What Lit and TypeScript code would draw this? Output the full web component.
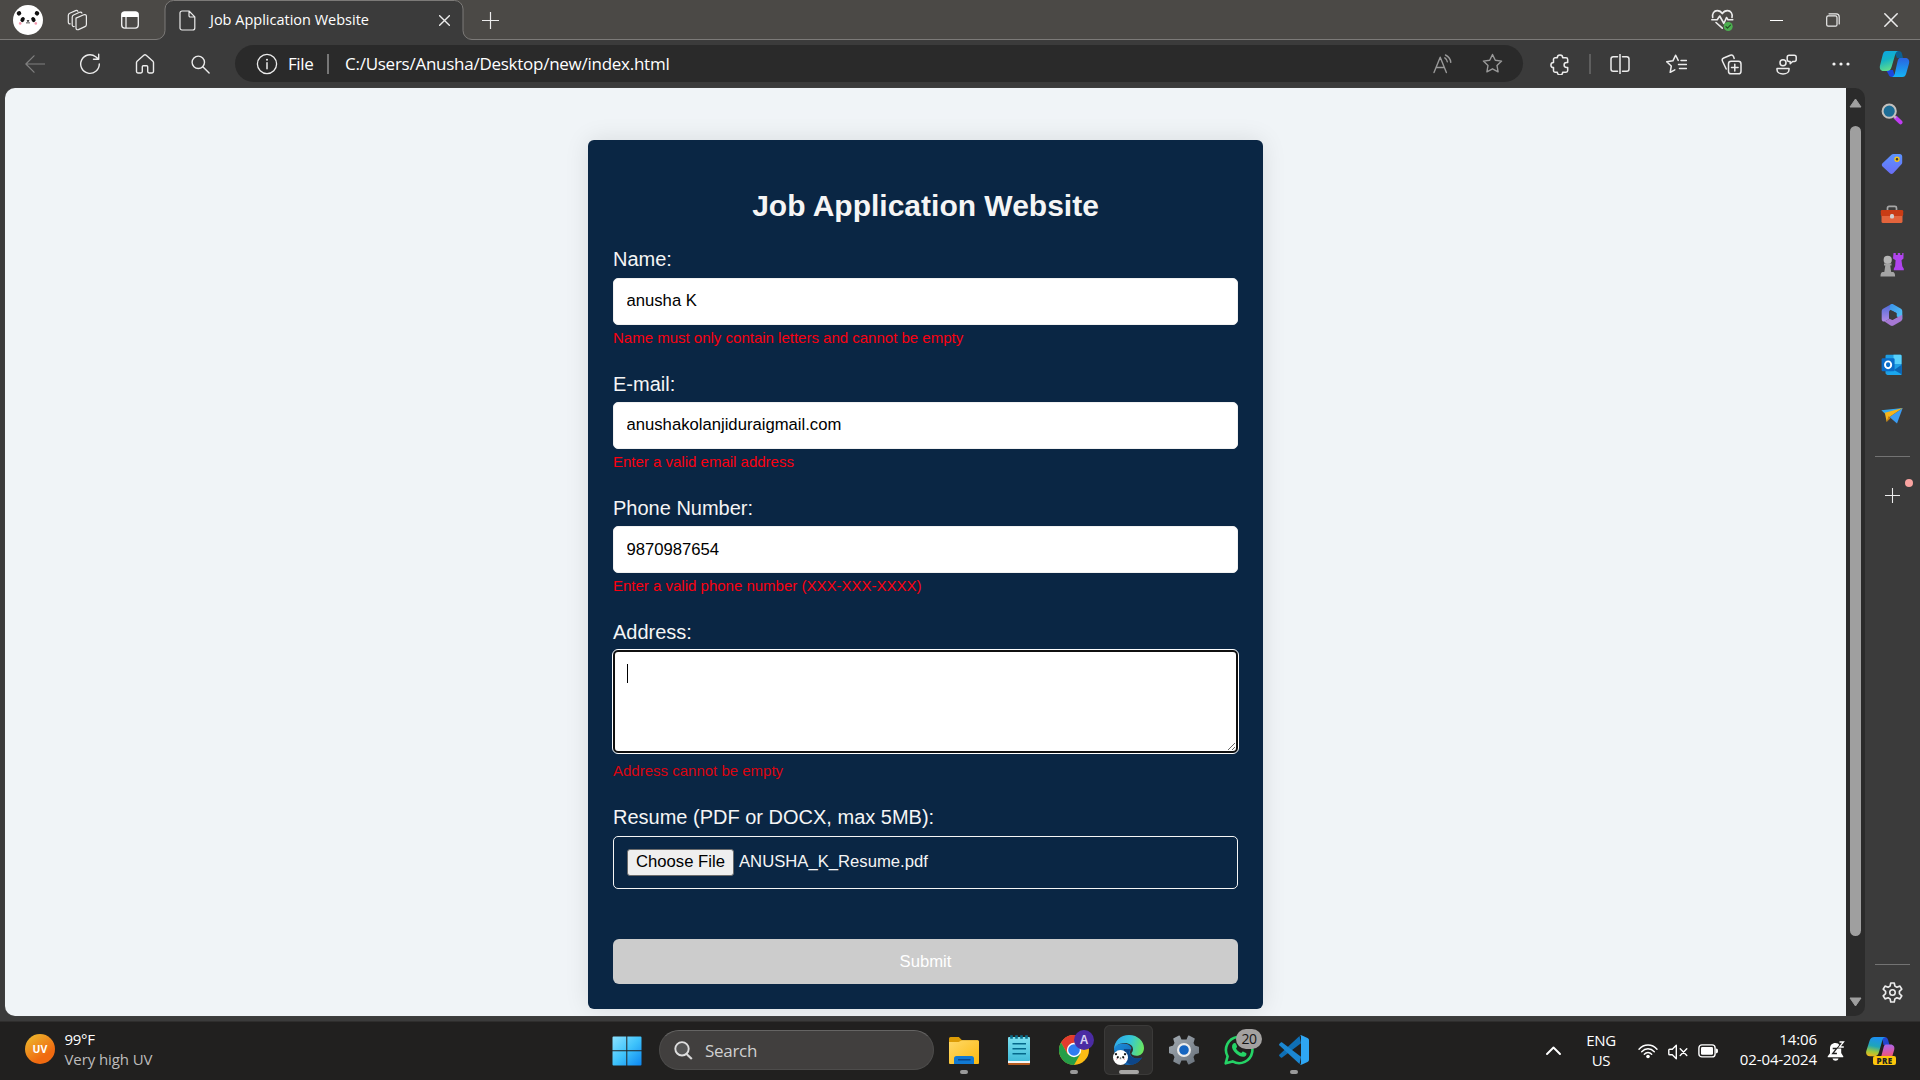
import { LitElement, html, css, nothing } from "lit";
import { customElement } from "lit/decorators.js";

/* ---------- browser chrome icons ---------- */

const panda = (size: number) => html`<svg width=${size} height=${size} viewBox="0 0 30 30">
  <circle cx="15" cy="15" r="15" fill="#fff" />
  <ellipse cx="6" cy="8.3" rx="2.3" ry="2.2" fill="#111" transform="rotate(-35 6 8.3)" />
  <ellipse cx="24" cy="8.3" rx="2.3" ry="2.2" fill="#111" transform="rotate(35 24 8.3)" />
  <ellipse cx="9.6" cy="14.6" rx="2" ry="2.6" fill="#111" transform="rotate(30 9.6 14.6)" />
  <ellipse cx="20.4" cy="14.6" rx="2" ry="2.6" fill="#111" transform="rotate(-30 20.4 14.6)" />
  <circle cx="7.2" cy="18.4" r="1.3" fill="#f49ab0" />
  <circle cx="22.8" cy="18.4" r="1.3" fill="#f49ab0" />
  <path d="M14 15.6h2l-1 1.2z" fill="#111" stroke="#111" stroke-width=".6" />
  <path d="M13 17.6q1 1 2 0q1 1 2 0" fill="none" stroke="#111" stroke-width=".7" />
</svg>`;

const workspaces = html`<svg class="ln" width="22" height="22" viewBox="0 0 22 22">
  <path d="M10.2 8.3 18 4.9c1.400-.5 2.600.3 2.600 1.700v8c0 1-.5 1.800-1.400 2.200l-6.600 3c-1.300.5-2.400-.2-2.400-1.600z" transform="translate(-.2 .8)" />
  <path d="M8.200 17.500c-1.300.2-2-.5-2-1.800V8.200c0-1 .5-1.800 1.400-2.200l6-2.700c1-.4 1.900-.1 2.300.8" />
  <path d="M4.200 14.900c-1.200.1-1.900-.6-1.900-1.800V6.400c0-1 .5-1.800 1.400-2.200L9.600 1.600c1-.4 1.800-.1 2.300.7" />
</svg>`;

const tabActions = html`<svg width="20" height="20" viewBox="0 0 20 20">
  <rect x="1.700" y="1.900" width="16.600" height="16.200" rx="3" fill="none" stroke="#ececec" stroke-width="1.400" />
  <path d="M1.700 7V4.500a2.700 2.700 0 0 1 2.700-2.700h11.200a2.700 2.700 0 0 1 2.700 2.700V7z" fill="#fff" />
  <path d="M6 7v11" stroke="#ececec" stroke-width="1.300" />
</svg>`;

const page = html`<svg class="ln" width="17" height="21" viewBox="0 0 17 21">
  <path d="M3 1h7l5.800 5.800V18a2 2 0 0 1-2 2H3a2 2 0 0 1-2-2V3a2 2 0 0 1 2-2zM10 1v4.800a1.200 1.200 0 0 0 1.200 1.200h4.600" />
</svg>`;

const cross = (s: number, w = 1.3) => html`<svg class="ln" width=${s} height=${s} viewBox="0 0 12 12">
  <path d="M.7.7l10.600 10.600M11.300.7.7 11.300" stroke-width=${w} />
</svg>`;
const plus = (s: number) => html`<svg class="ln" width=${s} height=${s} viewBox="0 0 17 17"><path d="M8.500 0v17M0 8.500h17" /></svg>`;

const heart = html`<svg class="ln" width="24" height="24" viewBox="0 0 24 24">
  <path d="M1.700 9.500C.9 5.800 3 2.600 6.200 2.600c2.400 0 4 1.100 5.100 3 1.100-1.900 2.800-3 5.200-3 3.300 0 5.300 3.200 4.500 6.900" stroke-width="1.600" />
  <path d="M.8 11.800h5.400L8.700 8l4.200 7.500 2.600-6 1.500 2.300h4.800" stroke-width="1.600" />
  <path d="m5 14.500 6.300 5.700" stroke-width="1.600" />
  <circle cx="17.200" cy="18.500" r="4.500" fill="#4caf50" stroke="none" />
  <path d="m15 18.700 1.500 1.400 2.900-3" stroke="#234c25" stroke-width="1.200" />
</svg>`;
const minimize = html`<svg class="ln" width="13" height="3" viewBox="0 0 13 3"><path d="M0 1.500h13" stroke="#fff" stroke-width="1.200" /></svg>`;
const restore = html`<svg class="ln" width="14" height="14" viewBox="0 0 14 14">
  <rect x=".7" y="2.900" width="10.300" height="10.300" rx="1.500" />
  <path d="M3 .8h7.300c1.700 0 2.900 1.200 2.900 2.900V11" />
</svg>`;

const back = html`<svg class="ln dim" width="20" height="18" viewBox="0 0 20 18"><path d="M20 9H1M9 .8.900 9 9 17.200" /></svg>`;
const refresh = html`<svg class="ln" width="22" height="22" viewBox="0 0 22 22">
  <path d="M20.300 11a9.300 9.300 0 1 1-3.600-7.300l2.600 2.200M19.700 1.200v5h-5.200" stroke-width="1.400" />
</svg>`;
const home = html`<svg class="ln" width="20" height="20" viewBox="0 0 20 20">
  <path d="M1.500 8.600c0-.6.200-1 .6-1.400l6.700-5.900a1.800 1.800 0 0 1 2.400 0l6.700 5.900c.4.400.6.8.6 1.400v9c0 .8-.6 1.400-1.400 1.400h-3c-.8 0-1.400-.6-1.400-1.400v-4.800c0-.6-.4-1-1-1H8.300c-.6 0-1 .4-1 1v4.800c0 .8-.6 1.400-1.400 1.400h-3c-.8 0-1.400-.6-1.400-1.400z" stroke-width="1.400" />
</svg>`;
const search = html`<svg class="ln" width="19" height="19" viewBox="0 0 19 19">
  <circle cx="7.300" cy="7.300" r="6.200" stroke-width="1.400" /><path d="m11.800 11.800 6.300 6.300" stroke-width="1.400" />
</svg>`;
const info = html`<svg class="ln" width="22" height="22" viewBox="0 0 22 22">
  <circle cx="11" cy="11" r="9.600" stroke-width="1.300" /><path d="M11 9.800v6" stroke-width="1.500" /><circle cx="11" cy="6.800" r="1" fill="#eee" stroke="none" />
</svg>`;
const readAloud = html`<svg class="ln dim2" width="20" height="20" viewBox="0 0 20 20">
  <path d="M1 18.500 7.200 3.200l6.200 15.300M3.200 13.500h8M11.800 3.800c1.500 1 2.400 2.300 2.500 4M12.500 1c3 1.500 4.900 3.900 5.300 7.300" />
</svg>`;
const starPath = "M10.500 1.500l2.800 5.700 6.300.9-4.600 4.400 1.100 6.300-5.600-3-5.600 3L6 12.500 1.400 8.100l6.300-.9z";
const star = html`<svg class="ln dim2" width="21" height="21" viewBox="0 0 21 21"><path d=${starPath} /></svg>`;
const puzzle = html`<svg class="ln" width="20" height="21" viewBox="0 0 20 21">
  <path d="M7.300 3.700a2.700 2.700 0 0 1 5.400 0h3.300c1 0 1.700.7 1.700 1.700v3.200h-1.200a2.400 2.400 0 0 0 0 4.800h1.200v3.200c0 1-.7 1.700-1.700 1.700h-3.300a2.700 2.700 0 0 1-5.400 0H5.200c-1 0-1.700-.7-1.700-1.700v-3a2.600 2.600 0 0 1 0-5.200v-3c0-1 .7-1.700 1.700-1.700z" stroke-width="1.500" />
</svg>`;
const split = html`<svg class="ln" width="20" height="20" viewBox="0 0 20 20">
  <path d="M7.500 2.700H3.300C2 2.700 1 3.700 1 5v10c0 1.300 1 2.300 2.300 2.300h4.200M12.500 2.700h4.200C18 2.700 19 3.700 19 5v10c0 1.300-1 2.300-2.300 2.300h-4.200M10 .5v19" stroke-width="1.500" />
</svg>`;
const favorites = html`<svg class="ln" width="21" height="20" viewBox="0 0 21 20">
  <path d="M12.200 6.400 9.700 1.200 6.900 6.800.7 7.700l4.600 4.300-1.100 6.300 4.600-2.500M15 6.500h5.500M12.500 10.500h8M13.500 14.500h7" stroke-width="1.500" />
</svg>`;
const collections = html`<svg class="ln" width="21" height="21" viewBox="0 0 21 21">
  <rect x="7.500" y="7.300" width="12.500" height="12.500" rx="2.600" stroke-width="1.500" />
  <path d="M13.800 10.300v6.600M10.500 13.600h6.600M5.200 15 1.500 7.200c-.6-1.300-.1-2.600 1.200-3.200l6.600-2.700c1.400-.5 2.800.2 3.300 1.500l.6 1.600" stroke-width="1.500" />
</svg>`;
const people = html`<svg class="ln" width="21" height="21" viewBox="0 0 21 21">
  <circle cx="7" cy="8.800" r="3" stroke-width="1.500" />
  <path d="M1 14.500h12v1.200c0 2.400-2.600 4.300-6 4.300s-6-1.900-6-4.300zM13.200 1.300h5a2 2 0 0 1 2 2v2.200a2 2 0 0 1-2 2h-1.600l-2.400 2.300V7.500h-1a2 2 0 0 1-2-2V3.300a2 2 0 0 1 2-2z" stroke-width="1.500" />
</svg>`;
const dots = html`<svg width="18" height="4" viewBox="0 0 18 4" fill="#f2f2f2"><circle cx="2" cy="2" r="1.600" /><circle cx="9" cy="2" r="1.600" /><circle cx="16" cy="2" r="1.600" /></svg>`;
const copilot = html`<svg width="31" height="28" viewBox="0 0 31 28">
  <defs>
    <linearGradient id="cpA" x1="0" y1="0" x2=".3" y2="1"><stop offset="0" stop-color="#0ba5e8" /><stop offset=".5" stop-color="#15b3c4" /><stop offset="1" stop-color="#5fdc8d" /></linearGradient>
    <linearGradient id="cpB" x1="0" y1="0" x2="0" y2="1"><stop offset="0" stop-color="#2a63e2" /><stop offset="1" stop-color="#14b4f5" /></linearGradient>
  </defs>
  <path d="M15 1h4.500c2 0 3 1 3.500 2.700L24 8h-6z" fill="#0d5f91" />
  <path d="M7 20h7l2 7h-3c-2 0-3-1-3.500-2.700z" fill="#1b47dc" />
  <path d="M7.500 1H19c-1.500.5-2.200 1.500-2.800 3.500l-3.500 12c-.9 3-2 4.500-5 4.500H4.500c-3 0-4.200-2.500-3.500-5.500L3.800 4.500C4.500 2 5.500 1 7.500 1z" fill="url(#cpA)" />
  <path d="M21 8h5.500c3 0 4.300 2.500 3.500 5.500l-2.800 10c-.7 2.500-1.800 3.500-3.800 3.500H13c1.500-.5 2.200-1.500 2.800-3.500l2.500-11C19 9.500 19.500 8 21 8z" fill="url(#cpB)" />
</svg>`;

/* ---------- sidebar icons ---------- */

const sideIcons = [
  html`<svg width="22" height="22" viewBox="0 0 22 22">
    <path d="m14.500 14.500 5 4.800" stroke="#c03cf4" stroke-width="4" stroke-linecap="round" /><path d="m12.500 12.500 2.500 2.500" stroke="#bbb" stroke-width="2" />
    <circle cx="8.200" cy="8.200" r="6.600" fill="#1d6d96" stroke="#c4c1be" stroke-width="2" />
  </svg>`,
  html`<svg width="22" height="22" viewBox="0 0 22 22">
    <defs><linearGradient id="tg" x1="0" y1="0" x2="0" y2="1"><stop offset="0" stop-color="#5b93ff" /><stop offset="1" stop-color="#6a6df5" /></linearGradient></defs>
    <path d="M12.500 1h6.300c1.400 0 2.400 1 2.400 2.400v6.200c0 .7-.2 1.200-.7 1.700l-8.300 9c-1 1-2.400 1-3.400 0L1.500 13.500c-.9-1-.9-2.300 0-3.200l9-8.500c.5-.5 1.200-.8 2-.8z" fill="url(#tg)" />
    <circle cx="16" cy="6.300" r="2" fill="#3a3a3a" stroke="#f5c518" stroke-width="1.400" />
  </svg>`,
  html`<svg width="24" height="18" viewBox="0 0 24 18">
    <path d="M7.500 5V3c0-1 .6-1.600 1.600-1.600h5.800c1 0 1.600.6 1.600 1.600v2" fill="none" stroke="#a7a7a7" stroke-width="1.700" />
    <rect x="1.500" y="8" width="21" height="10" rx="1.600" fill="#e3643c" /><rect x=".8" y="5" width="22.400" height="6" rx="1.300" fill="#c93c15" /><rect x="10" y="9" width="4" height="4.500" rx="1.500" fill="#d0d0d0" />
  </svg>`,
  html`<svg width="24" height="24" viewBox="0 0 24 24">
    <path d="M13.500 0h2.300v2h2V0h2.400v2h2V0h1.300v5.500l-2 1.800.8 6 1.500 2.500v1.500h-10v-1.500l1.300-2.500.5-6-2.600-1.800z" fill="#b044ee" />
    <circle cx="7.700" cy="6.900" r="4.100" fill="#b5b5b5" />
    <path d="M4 10.500h7.500v2h-1.300l1 6.500h1.600c1.500 0 2.300 1.500 2.300 4.500H.500c0-3 .8-4.500 2.300-4.500h1.500l1-6.500H4z" fill="#a4a4a4" />
  </svg>`,
  html`<svg width="22" height="24" viewBox="0 0 22 24">
    <defs><linearGradient id="mA" x1="0" y1="0" x2="0" y2="1"><stop offset="0" stop-color="#4a6ad8" /><stop offset="1" stop-color="#b28be6" /></linearGradient><linearGradient id="mB" x1="0" y1="0" x2="1" y2="1"><stop offset="0" stop-color="#3a8fe8" /><stop offset="1" stop-color="#54c8f6" /></linearGradient></defs>
    <path d="M10.500 1 2.500 5.500C1.300 6.200.7 7.200.7 8.600v7.600c0 2 1.800 3 3.400 2l4-2.300V9.500c0-1.200.5-2 1.400-2.700z" fill="url(#mA)" />
    <path d="M10 1.200c.9-.4 1.700-.3 2.600.2l7 4.100c1.200.7 1.700 1.700 1.700 3v8l-5.800-3.300V10L8.600 6.500 9 2.500z" fill="url(#mB)" />
    <path d="M3.500 18.600 8.500 15.700l3 1.400 9.700-5.300v3.800c0 1.300-.5 2.300-1.700 3l-7 4c-1 .5-2 .5-3 0z" fill="#a678d4" />
    <path d="m11 7.800 4.500 2.500v4l-4 2.500-3.400-1.800V9.800c0-1 .8-1.600 1.400-2z" fill="#3b3b3b" />
  </svg>`,
  html`<svg width="22" height="22" viewBox="0 0 22 22">
    <rect x="4.500" y=".8" width="16" height="19.500" rx="1.200" fill="#1f9fe4" /><path d="M12.500.8h7a1 1 0 0 1 1 1V10h-8z" fill="#58d1fb" />
    <path d="M21 10.500v9c0 .9-.7 1.500-1.500 1.500H5l9-6z" fill="#1aa7ee" /><path d="m21 10.500-8 5.500 8 4.500z" fill="#0c66b3" />
    <rect x=".6" y="4.300" width="13" height="13" rx="1.200" fill="#0a6cc7" /><ellipse cx="7.100" cy="10.800" rx="3.100" ry="3.400" fill="none" stroke="#fff" stroke-width="1.900" />
  </svg>`,
  html`<svg width="22" height="17" viewBox="0 0 22 17">
    <path d="M.3 3.200 21.700.9 6 8.500z" fill="#35a9f0" /><path d="M21.700.9 16 16.500 8.500 10z" fill="#3b9cf2" /><path d="M21.700.9 3.800 5.800 5.700 15l2-4.500z" fill="#f4b41c" /><path d="m5.700 15 3.700-3.800L7.500 9z" fill="#c77e12" />
  </svg>`,
];

const gearPath =
  "M8.900 1.300h3.200l.6 2.900 1.800 1 2.800-1 1.700 2.800-2.200 2v2l2.200 2-1.700 2.800-2.800-1-1.800 1-.6 2.900H8.900l-.6-2.900-1.800-1-2.800 1L2 13l2.200-2V9L2 7l1.700-2.800 2.800 1 1.800-1z";
const settingsLine = html`<svg class="ln" width="23" height="23" viewBox="0 0 21 20"><path d=${gearPath} stroke-width="1.500" /><circle cx="10.500" cy="10" r="2.500" stroke-width="1.400" /></svg>`;

/* ---------- taskbar icons ---------- */

const windowsLogo = html`<svg width="30" height="30" viewBox="0 0 30 30">
  <defs><linearGradient id="wl" gradientUnits="userSpaceOnUse" x1="0" y1="0" x2="30" y2="30"><stop offset="0" stop-color="#8fe3ff" /><stop offset=".5" stop-color="#3fc3fb" /><stop offset="1" stop-color="#0a84f0" /></linearGradient></defs>
  <path fill="url(#wl)" d="M1.500.5H14.300v13.800H.5V1.500a1 1 0 0 1 1-1zM15.300.5h13.200a1 1 0 0 1 1 1v12.800H15.300zM.5 15.300h13.800v14.200H1.500a1 1 0 0 1-1-1zM15.300 15.300h14.200v13.200a1 1 0 0 1-1 1H15.300z" />
</svg>`;
const taskSearch = html`<svg width="19" height="19" viewBox="0 0 19 19"><path d="m12 12.500 5.800 5.500" stroke="#d8d8d8" stroke-width="2.200" /><circle cx="8" cy="7.800" r="6.700" fill="#555" stroke="#dedede" stroke-width="1.900" /></svg>`;
const folder = html`<svg width="30" height="27" viewBox="0 0 30 27">
  <defs><linearGradient id="fd" x1="0" y1="0" x2="1" y2="1"><stop offset="0" stop-color="#ffd968" /><stop offset="1" stop-color="#fbb90f" /></linearGradient></defs>
  <path d="M0 1.500A1.500 1.500 0 0 1 1.500 0h8.300L13 3.300h15.500A1.500 1.500 0 0 1 30 4.800V8H0z" fill="#dc9c06" />
  <path d="M0 5h9.500L13 3.300h15.500A1.500 1.500 0 0 1 30 4.800V26a1 1 0 0 1-1 1H1a1 1 0 0 1-1-1z" fill="url(#fd)" />
  <path d="M5 27v-5.500A2.500 2.500 0 0 1 7.500 19h15a2.500 2.500 0 0 1 2.500 2.500V27z" fill="#1179d2" /><path d="M9 22.800h12.500" stroke="#0a3f80" stroke-width="1.300" />
</svg>`;
const notepad = html`<svg width="22" height="30" viewBox="0 0 22 30">
  <rect x="0" y="24" width="22" height="6" rx="1" fill="#b75b1e" /><rect x="0" y="24" width="22" height="4" fill="#f5f5f5" />
  <defs><linearGradient id="np" x1="0" y1="0" x2="0" y2="1"><stop offset="0" stop-color="#7be0ef" /><stop offset="1" stop-color="#41bcd9" /></linearGradient></defs>
  <rect x="0" y="2" width="22" height="24" rx="1" fill="url(#np)" />
  <path d="M4.500 8.700h13.500M4.500 13.700h13.500M4.500 18.700h13.500" stroke="#04688a" stroke-width="1.500" />
  <path d="M3.500.3v3.500M8.500.3v3.500M13.500.3v3.500M18.500.3v3.500" stroke="#0b6f8c" stroke-width="2.600" />
</svg>`;
const chrome = html`<svg width="30" height="30" viewBox="0 0 30 30">
  <circle cx="15" cy="15" r="15" fill="#fbbc14" />
  <path d="M2 7.500A15 15 0 0 1 28 7.500H15l-6.500 11.300z" fill="#e33b2e" />
  <path d="M2 7.500A15 15 0 0 0 15 30l6.500-11.300h-13z" fill="#259e48" />
  <circle cx="15" cy="15" r="7.200" fill="#fff" /><circle cx="15" cy="15" r="5.800" fill="#2f7cf0" />
</svg>`;
const edge = html`<svg width="30" height="30" viewBox="0 0 30 30">
  <defs>
    <linearGradient id="eA" x1="0" y1=".4" x2="1" y2=".6"><stop offset="0" stop-color="#2fa8ea" /><stop offset=".5" stop-color="#34c6d8" /><stop offset="1" stop-color="#6ce85a" /></linearGradient>
    <linearGradient id="eB" x1="0" y1="0" x2="1" y2="1"><stop offset="0" stop-color="#1c90de" /><stop offset="1" stop-color="#0f4f99" /></linearGradient>
  </defs>
  <path d="M0 14C1 21 3 30 15 30c6 0 10.500-3 13-7.500-6 3-12-.5-12-5 0-2 1-3 1.500-4.500C15 7 3 7 0 14z" fill="url(#eB)" />
  <path d="M10 14c-3 7 1 14.500 8 15.700 4-.7 8-3.500 10-7.200-6 3-12.500-.5-12.500-5 0-1.500.5-2.500 1.200-3.300z" fill="#0d4689" />
  <path d="M0 14.500C0 6 6.500 0 15 0c9 0 15 6.500 15 13 0 5-3.500 7.800-7.500 7.800-3 0-5-1-5-2.200 0-1 1.500-1.500 1.500-4.600 0-3.500-4-6-8.500-6C5.500 8 1.500 10.500 0 14.500z" fill="url(#eA)" />
</svg>`;
const settingsColor = html`<svg width="30" height="30" viewBox="0 0 30 30">
  <defs><linearGradient id="sg" x1="0" y1="0" x2="1" y2="1"><stop offset="0" stop-color="#a3abb2" /><stop offset="1" stop-color="#68717b" /></linearGradient></defs>
  <path d="M12 5.200 10.300 1.200 5 3.800 6.300 8 4.500 11.300.5 12.500v5l4 1.200L6.300 22 5 26.200l5.300 2.600L12 24.800h6l1.700 4 5.300-2.600L23.700 22l1.800-3.300 4-1.200v-5l-4-1.200L23.700 8 25 3.800l-5.300-2.600-1.700 4z" fill="url(#sg)" stroke="url(#sg)" stroke-width="1.500" stroke-linejoin="round" />
  <circle cx="15" cy="15" r="5.900" fill="#1565c0" stroke="#ececec" stroke-width="2.200" />
</svg>`;
const whatsapp = html`<svg width="30" height="30" viewBox="0 0 30 30">
  <path d="M1.700 28.300 3.600 21.300a13.200 13.200 0 1 1 5 5.100z" fill="none" stroke="#25d366" stroke-width="2.600" stroke-linejoin="round" />
  <path d="M10.500 8c.8-.2 1.200.1 1.500.8l1 2.500c.2.600-.1 1.100-1 2.100 1.500 2.500 2.800 3.600 5.300 4.600.7-1 1.300-1.700 1.700-1.600l3 1.500c.8.400.6 2.200-.4 3-2.400 1.900-6 .6-9-1.800-3.500-3-5.300-6.100-4.400-8.800.4-1.200 1.300-2 2.300-2.300z" fill="#25d366" />
</svg>`;
const vscode = html`<svg width="30" height="30" viewBox="0 0 30 30">
  <path d="m22 8.300-18.800 14.200c-.5.400-1 .3-1.400 0l-1.300-1.300c-.6-.5-.6-1.200 0-1.700L20.500 1z" fill="#0f6fb5" />
  <path d="M22 21.700 3.200 7.500c-.5-.4-1-.3-1.400 0L.5 8.800c-.6.500-.6 1.200 0 1.700L20.500 29z" fill="#1b87d2" />
  <path d="M20.500 1c.6-.7 1.500-.9 2.500-.5l5.500 2.600c1 .5 1.500 1.200 1.500 2.300v19.200c0 1.100-.5 1.800-1.500 2.300L23 29.500c-1 .4-1.900.2-2.500-.5.900.6 1.500-.1 1.500-1V2c0-.9-.6-1.600-1.500-1z" fill="#2ea6f3" />
</svg>`;
const chevron = html`<svg class="ln" width="15" height="9" viewBox="0 0 15 9"><path d="m1 8 6.500-6.500L14 8" stroke="#fff" stroke-width="1.900" /></svg>`;
const wifi = html`<svg class="ln" width="20" height="16" viewBox="0 0 20 16">
  <path d="M1 6.200c5-5.600 13-5.600 18 0M3.700 8.700c3.600-3.900 9-3.900 12.600 0M6.300 11.200c2.200-2.300 5.200-2.300 7.400 0" stroke="#fff" stroke-width="1.400" /><circle cx="10" cy="13.500" r="1.800" fill="#fff" stroke="none" />
</svg>`;
const mute = html`<svg class="ln" width="20" height="16" viewBox="0 0 20 16">
  <path d="M1.700 5.200h2.600L8.300 1.300v13.400l-4-3.900H1.700a.9.900 0 0 1-.9-.9V6.100c0-.5.400-.9.900-.9zM12.200 4.800l6.600 6.600M18.800 4.800l-6.600 6.600" stroke="#fff" stroke-width="1.400" />
</svg>`;
const battery = html`<svg width="21" height="14" viewBox="0 0 21 14">
  <rect x=".9" y=".9" width="16.200" height="12" rx="3" fill="none" stroke="#fff" stroke-width="1.400" /><rect x="3" y="3" width="12" height="7.800" rx="1.200" fill="#fff" /><path d="M18 4.500c1.300 0 2 .8 2 2.400S19.300 9.300 18 9.300z" fill="#fff" />
</svg>`;
const bell = html`<svg width="18" height="20" viewBox="0 0 18 20">
  <path d="M8.500 2C4.900 2 3 4.300 3 7.500v4.700L.8 15.200c-.4.600-.1 1.100.5 1.100h14.400c.6 0 .9-.5.500-1.100L14.200 12V6L11 2.600z" fill="#fff" /><path d="M5.500 17.500h6c-.5 1.500-1.500 2.200-3 2.200s-2.500-.7-3-2.200z" fill="#fff" />
  <path d="M5.700 7.500h4L5.700 12.500h4.200" fill="none" stroke="#222" stroke-width="1.300" />
  <path d="M12.500 1h4l-4 5h4" fill="none" stroke="#21201f" stroke-width="3" /><path d="M12.500 1h4L12.500 6h4.300" fill="none" stroke="#fff" stroke-width="1.300" />
</svg>`;
const copilotPre = html`<svg width="30" height="24" viewBox="0 0 30 24">
  <defs>
    <linearGradient id="pA" x1=".4" y1="0" x2=".2" y2="1"><stop offset="0" stop-color="#1d8ff0" /><stop offset=".45" stop-color="#1fa5b8" /><stop offset=".75" stop-color="#9fc93a" /><stop offset="1" stop-color="#f3b31c" /></linearGradient>
    <linearGradient id="pB" x1=".2" y1="0" x2=".3" y2="1"><stop offset="0" stop-color="#a569f0" /><stop offset=".6" stop-color="#e0569f" /><stop offset="1" stop-color="#f0604a" /></linearGradient>
  </defs>
  <path d="M16 0h2.500c2 0 3 1 3.600 3l1.400 5h-6z" fill="#2346cf" />
  <path d="M8.500 0h11c-1.800.3-2.600 1.500-3.200 3.500L13 15c-.9 3-2 4.300-5 4.300H4c-3 0-4.500-2.300-3.700-5.300L3.500 4C4.300 1.300 5.800 0 8.500 0z" fill="url(#pA)" />
  <path d="M20 7.500h4.500c3 0 4.500 2.300 3.700 5.300L25.500 22H12c2 0 3-1.500 3.500-3.500l2.200-8.500c.4-1.500 1-2.500 2.300-2.500z" fill="url(#pB)" />
</svg>`;

interface Field {
  label: string;
  value: string;
  error: string;
}

const fields: Field[] = [
  { label: "Name:", value: "anusha K", error: "Name must only contain letters and cannot be empty" },
  { label: "E-mail:", value: "anushakolanjiduraigmail.com", error: "Enter a valid email address" },
  { label: "Phone Number:", value: "9870987654", error: "Enter a valid phone number (XXX-XXX-XXXX)" },
];

@customElement("app-root")
export class AppRoot extends LitElement {
  static styles = css`
    :host { display: block; width: 1920px; height: 1080px; overflow: hidden; }
    * { box-sizing: border-box; }
    svg { display: block; flex: none; }
    .ln { fill: none; stroke: #ececec; stroke-width: 1.2; stroke-linecap: round; stroke-linejoin: round; }
    .dim { stroke: #808080; }
    .dim2 { stroke: #999; stroke-width: 1.4; }
    .screen { display: flex; flex-direction: column; width: 1920px; height: 1080px; background: #3b3b3b; color: #fff; font-family: "Open Sans", "Noto Sans", sans-serif; white-space: nowrap; }
    .cell { display: flex; align-items: center; justify-content: center; flex: none; height: 100%; }
    .c48 { width: 48px; } .c49 { width: 49px; } .c50 { width: 50px; } .c51 { width: 51px; } .c52 { width: 52px; }
    .c54 { width: 54px; } .c56 { width: 56px; } .c57 { width: 57px; } .c59 { width: 59px; }
    .grow { flex: 1; }

    .strip { display: flex; height: 40px; padding-left: 4px; background: #4b4946; box-shadow: inset 0 -1px #7c7a78; }
    .tab { position: relative; display: flex; align-items: center; width: 298px; margin-left: 7px; padding: 0 13px 0 14px; }
    .tab + .cell { padding-right: 2px; }
    .tab-shape { position: absolute; left: -12px; top: 0; }
    .tab-body { position: relative; display: flex; align-items: center; width: 100%; }
    .tab-title { flex: 1; padding: 0 0 2px 14px; font-size: 14.500px; }

    .tools { display: flex; align-items: center; height: 48px; padding-left: 8px; }
    .tools .cell { height: 46px; }
    .address { display: flex; align-items: center; width: 1288px; height: 37px; margin: 0 10px 1px 7px; padding: 0 6px 0 21px; border-radius: 19px; background: #2a2a2a; font-size: 17px; }
    .address .cell { height: 37px; }
    .scheme { width: 39px; margin-left: 10px; padding-bottom: 1px; letter-spacing: -0.4px; }
    .bar { width: 2px; height: 20px; background: #777; }
    .url { flex: 1; padding: 0 0 1px 16px; letter-spacing: -0.26px; }
    .sep { width: 2px; height: 20px; margin: 0 1px 0 2px; background: #5e5e5e; }

    .middle { display: flex; height: 928px; padding-left: 5px; }
    .page { display: flex; justify-content: center; width: 1841px; height: 928px; padding-top: 52px; border-radius: 10px 0 0 10px; background: #f0f4f7; font-family: "Liberation Sans", Arial, sans-serif; overflow: hidden; box-shadow: 0 0 0 1px #46464655; }
    .form { width: 675px; height: 869px; padding: 49px 25px 0; border-radius: 6px; background: #0a2644; box-shadow: 0 0 25px rgba(0, 0, 0, 0.1); color: #f5f5f5; }
    h1 { margin: 0 0 24px; font-size: 30px; line-height: 34px; text-align: center; }
    label { display: block; margin-bottom: 6px; font-size: 20px; line-height: 24px; }
    .field { margin-bottom: 24px; }
    .field:first-of-type label, .resume label { margin-bottom: 7px; }
    input { display: block; width: 100%; height: 47px; padding: 10px 12px 12px 12.500px; border: 1px solid #f1f1f1; border-radius: 5px; background: #fff; color: #000; font: 16.670px "Liberation Sans", Arial, sans-serif; outline: none; }
    .field:nth-of-type(3) input { padding: 12px 12px 11px 12.500px; }
    .error { margin-top: 3px; color: #fa0010; font-size: 15px; line-height: 20px; }
    .area { position: relative; height: 103px; }
    textarea { display: block; width: 100%; height: 103px; border: 2px solid #101010; border-radius: 5px; outline: 1px solid #fff; background: #fff; resize: vertical; }
    .caret { position: absolute; left: 14px; top: 14px; width: 1px; height: 19px; background: #000; }
    .area + .error { margin-top: 8px; color: #dc0410; }
    .file { display: flex; align-items: center; height: 53px; padding-left: 13px; border: 1px solid #f5f5f5; border-radius: 5px; font-size: 16.670px; }
    .choose { width: 107px; height: 27px; padding: 0 0 2px; border: 1px solid #6b6b6b; border-radius: 3px; background: #efefef; color: #000; font: 16.670px "Liberation Sans", Arial, sans-serif; }
    .filename { padding: 0 0 1px 5px; }
    .submit { width: 100%; height: 45px; margin-top: 50px; padding: 0; border: 0; border-radius: 6px; background: #ccc; color: #fff; font: 16.670px "Liberation Sans", Arial, sans-serif; }

    .scroll { display: flex; flex-direction: column; align-items: center; width: 19px; padding: 10px 0 9px; border-radius: 0 10px 10px 0; background: #2b2b2b; }
    .thumb { width: 11px; height: 811px; margin: 18px 0 61px; border-radius: 6px; background: #9f9f9f; }
    .side { display: flex; flex-direction: column; align-items: center; width: 55px; padding-top: 1px; }
    .side-item { display: flex; align-items: center; justify-content: center; height: 50.200px; padding-right: 1px; }
    .rule { width: 35px; height: 1px; background: #737373; }
    .side-item + .rule { margin-top: 15.600px; }
    .add { position: relative; display: flex; align-items: center; justify-content: center; width: 55px; height: 78px; padding-right: 1px; }
    .ping { position: absolute; left: 40px; top: 22px; width: 8px; height: 8px; border-radius: 50%; background: #f9a3a0; }
    .gear { display: flex; align-items: center; height: 55px; margin-bottom: -4px; }

    .taskbar { display: flex; align-items: center; height: 59px; margin-top: 5px; background: #21201f; box-shadow: inset 0 1px #2f2e2d; font-size: 15px; }
    .weather { display: flex; align-items: center; width: 612px; padding-left: 25px; }
    .uv { display: flex; align-items: center; justify-content: center; width: 30px; height: 30px; margin: 0 9.500px 3px 0; border-radius: 50%; background: linear-gradient(145deg, #ecc030, #f06a10 70%); font-size: 10.500px; font-weight: 700; }
    .two { display: flex; flex-direction: column; padding-bottom: 4px; line-height: 20px; letter-spacing: -0.3px; }
    .muted { color: #bdbcbc; letter-spacing: -0.1px; }
    .find { display: flex; align-items: center; width: 275px; height: 40px; margin: 0 0 1px 17px; padding-left: 14px; border: 1px solid #5c5b5a; border-color: #656463 #4d4c4b #4d4c4b; border-radius: 20px; background: #413f3e; color: #d0d0d0; font-size: 17px; letter-spacing: -0.3px; }
    .find span { padding-left: 12px; }
    .app { position: relative; display: flex; align-items: center; justify-content: center; width: 49px; height: 50px; margin-right: 6px; border-radius: 6px; }
    .apps { display: flex; margin: 0 auto 1px 5px; }
    .active { background: #2f2e2d; box-shadow: inset 0 0 0 1px #3b3a39; }
    .run { position: absolute; left: 20.500px; bottom: 1px; width: 8px; height: 4px; border-radius: 2px; background: #9a9a9a; }
    .active .run { left: 14.500px; width: 20px; background: #a8a7a6; }
    .profile { position: absolute; left: 25px; top: 5px; width: 20px; height: 20px; border-radius: 50%; background: #4b2ba3; color: #d9d0f2; font: 600 12px/20px "Liberation Sans", sans-serif; text-align: center; }
    .face { position: absolute; left: 9px; top: 25px; }
    .count { position: absolute; left: 22px; top: 4px; width: 26px; height: 20px; border-radius: 10px; background: #a3a1a0; color: #161616; font-size: 14px; line-height: 20px; text-align: center; letter-spacing: -0.5px; }
    .tray { display: flex; align-items: center; height: 58px; }
    .lang { width: 48px; align-items: center; margin-left: 16px; padding-bottom: 2px; }
    .wifi { margin-left: 13px; }
    .mute { margin: 2px 0 0 10px; }
    .battery { margin-left: 10px; }
    .clock { width: 98px; align-items: flex-end; letter-spacing: -0.1px; }
    .bell { margin-left: 10px; }
    .pre { position: relative; width: 31px; height: 28px; margin: 0 23px 0 21px; }
    .pre-tag { position: absolute; left: 7px; top: 19px; width: 23px; height: 9px; border-radius: 2px; background: #fdc60b; color: #222; font-size: 8px; font-weight: 800; line-height: 9px; text-align: center; letter-spacing: 0.3px; }
  `;

  private field(f: Field) {
    return html`<div class="field">
      <label>${f.label}</label>
      <input type="text" .value=${f.value} />
      <div class="error">${f.error}</div>
    </div>`;
  }

  private app(icon: unknown, running: boolean, extra: unknown = nothing, active = false) {
    return html`<div class="app ${active ? "active" : ""}">${icon}${extra}${running ? html`<div class="run"></div>` : nothing}</div>`;
  }

  render() {
    return html`<div class="screen">
      <div class="strip">
        <div class="cell c48">${panda(30)}</div>
        <div class="cell c50">${workspaces}</div>
        <div class="cell c56">${tabActions}</div>
        <div class="tab">
          <svg class="tab-shape" width="322" height="40" viewBox="0 0 322 40">
            <path d="M0 39.500h3a9 9 0 0 0 9-9V9a8.500 8.500 0 0 1 8.500-8.500h281A8.500 8.500 0 0 1 310 9v21.500a9 9 0 0 0 9 9h3V40H0z" fill="#3b3b3b" />
            <path d="M0 39.500h3a9 9 0 0 0 9-9V9a8.500 8.500 0 0 1 8.500-8.500h281A8.500 8.500 0 0 1 310 9v21.500a9 9 0 0 0 9 9h3" fill="none" stroke="#7c7a78" />
          </svg>
          <div class="tab-body">${page}<span class="tab-title">Job Application Website</span>${cross(11, 1.5)}</div>
        </div>
        <div class="cell c56">${plus(17)}</div>
        <div class="grow"></div>
        <div class="cell c51">${heart}</div>
        <div class="cell c57">${minimize}</div>
        <div class="cell c56">${restore}</div>
        <div class="cell c59">${cross(14)}</div>
      </div>

      <div class="tools">
        <div class="cell c54">${back}</div>
        <div class="cell c56">${refresh}</div>
        <div class="cell c54">${home}</div>
        <div class="cell c56">${search}</div>
        <div class="address">
          ${info}<span class="scheme">File</span>
          <div class="bar"></div>
          <span class="url">C:/Users/Anusha/Desktop/new/index.html</span>
          <div class="cell c50">${readAloud}</div>
          <div class="cell c49">${star}</div>
        </div>
        <div class="cell c54">${puzzle}</div>
        <div class="sep"></div>
        <div class="cell c56">${split}</div>
        <div class="cell c56">${favorites}</div>
        <div class="cell c54">${collections}</div>
        <div class="cell c56">${people}</div>
        <div class="cell c54">${dots}</div>
        <div class="cell c52">${copilot}</div>
      </div>

      <div class="middle">
        <div class="page">
          <div class="form">
            <h1>Job Application Website</h1>
            ${fields.map((f) => this.field(f))}
            <div class="field">
              <label>Address:</label>
              <div class="area"><textarea></textarea><div class="caret"></div></div>
              <div class="error">Address cannot be empty</div>
            </div>
            <div class="resume">
              <label>Resume (PDF or DOCX, max 5MB):</label>
              <div class="file"><button class="choose">Choose File</button><span class="filename">ANUSHA_K_Resume.pdf</span></div>
            </div>
            <button class="submit">Submit</button>
          </div>
        </div>
        <div class="scroll">
          <svg width="13" height="10" viewBox="0 0 13 10"><path d="M6.500 1 12 9H1z" fill="#9f9f9f" stroke="#9f9f9f" stroke-linejoin="round" /></svg>
          <div class="thumb"></div>
          <svg width="13" height="10" viewBox="0 0 13 10"><path d="M6.500 9 12 1H1z" fill="#9f9f9f" stroke="#9f9f9f" stroke-linejoin="round" /></svg>
        </div>
        <div class="side">
          ${sideIcons.map((i) => html`<div class="side-item">${i}</div>`)}
          <div class="rule"></div>
          <div class="add">${plus(15)}<div class="ping"></div></div>
          <div class="grow"></div>
          <div class="rule"></div>
          <div class="gear">${settingsLine}</div>
        </div>
      </div>

      <div class="taskbar">
        <div class="weather">
          <div class="uv">UV</div>
          <div class="two"><span>99°F</span><span class="muted">Very high UV</span></div>
        </div>
        ${windowsLogo}
        <div class="find">${taskSearch}<span>Search</span></div>
        <div class="apps">
          ${this.app(folder, true)} ${this.app(notepad, false)}
          ${this.app(chrome, true, html`<div class="profile">A</div>`)}
          ${this.app(edge, true, html`<div class="face">${panda(15)}</div>`, true)}
          ${this.app(settingsColor, false)}
          ${this.app(whatsapp, false, html`<div class="count">20</div>`)}
          ${this.app(vscode, true)}
        </div>
        <div class="tray">
          ${chevron}
          <div class="two lang"><span>ENG</span><span>US</span></div>
          <div class="wifi">${wifi}</div>
          <div class="mute">${mute}</div>
          <div class="battery">${battery}</div>
          <div class="two clock"><span>14:06</span><span>02-04-2024</span></div>
          <div class="bell">${bell}</div>
          <div class="pre">${copilotPre}<div class="pre-tag">PRE</div></div>
        </div>
      </div>
    </div>`;
  }
}
